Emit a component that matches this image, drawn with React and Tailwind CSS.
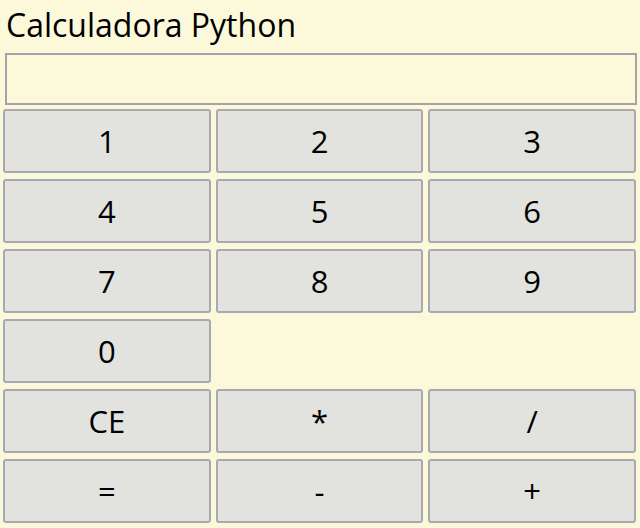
const keys = [
  ['1', '2', '3'],
  ['4', '5', '6'],
  ['7', '8', '9'],
  ['0', null, null],
  ['CE', '*', '/'],
  ['=', '-', '+'],
];

const CalcButton = ({ label }) => {
  if (!label) return <div />;
  return (
    <button className="h-[64px] rounded-[3px] border-2 border-[#a9a9b3] bg-[#e2e2de] text-[31px] text-black leading-none">
      {label}
    </button>
  );
};

const App = () => {
  return (
    <div
      className="w-[640px] h-[528px] bg-[#fbf9da] overflow-hidden"
      style={{ fontFamily: '"Open Sans", "Noto Sans", sans-serif' }}
    >
      <div className="h-[53px] pl-[6px] pt-[3px] text-[32px] leading-[44px] text-black">
        Calculadora Python
      </div>
      <div className="mx-[5px] mr-[3px] h-[52px] border-2 border-[#a3a3a8] bg-[#fbf9da]" />
      <div className="grid grid-cols-3 gap-x-[5px] gap-y-[6px] pl-[3px] pr-[4px] pt-[4px]">
        {keys.flat().map((k, i) => (
          <CalcButton key={i} label={k} />
        ))}
      </div>
    </div>
  );
};

export default App;
